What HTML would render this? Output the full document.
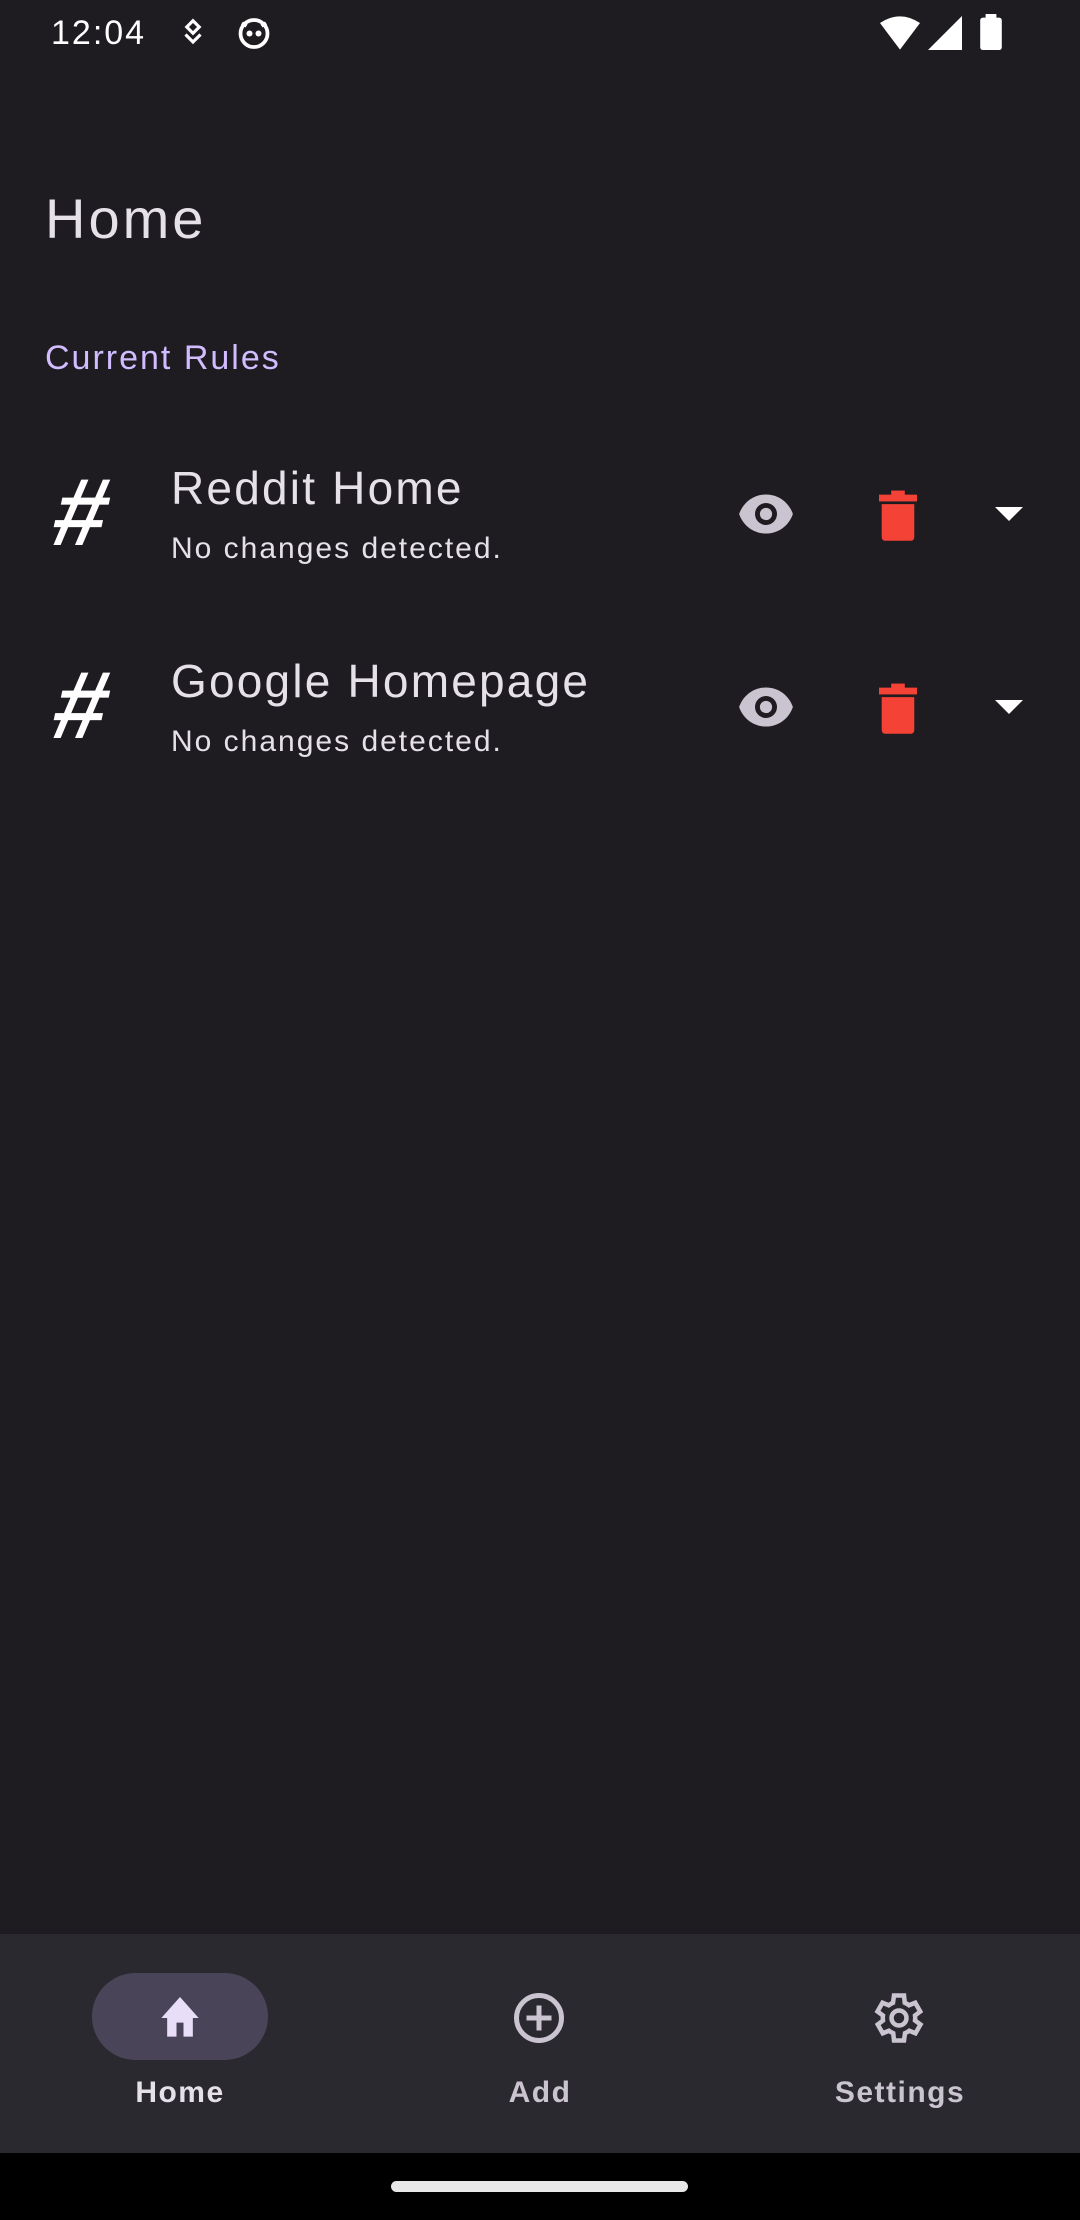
<!DOCTYPE html>
<html><head><meta charset="utf-8"><style>
body{margin:0;width:1080px;height:2220px;background:#1e1c21;font-family:"Liberation Sans",sans-serif;position:relative;overflow:hidden;color:#e6e0e9}
.a{position:absolute}
.h{font-size:96px;font-weight:bold;color:#fff;line-height:96px;transform:skewX(-12deg);letter-spacing:0}
</style></head><body>
<div class="a" style="left:51px;top:14px;font-size:34px;color:#fff;letter-spacing:2px">12:04</div>
<svg class="a" style="left:178px;top:16px" width="30" height="32" viewBox="0 0 24 24"><path d="M12 3l5 5-5 5-5-5z M6 14l6 6 6-6" fill="none" stroke="#fff" stroke-width="2.5"/></svg>
<svg class="a" style="left:236px;top:14px" width="36" height="36" viewBox="0 0 24 24"><circle cx="12" cy="13" r="9" fill="none" stroke="#fff" stroke-width="2.5"/><circle cx="9" cy="13" r="2" fill="#fff"/><circle cx="15" cy="13" r="2" fill="#fff"/><path d="M4 6l3 2M20 6l-3 2" stroke="#fff" stroke-width="2.5"/></svg>
<svg class="a" style="left:880px;top:16px" width="40" height="34" viewBox="0 0 24 20"><path d="M0 4Q12-4 24 4L12 20z" fill="#fff"/></svg>
<svg class="a" style="left:928px;top:16px" width="34" height="34" viewBox="0 0 20 20"><path d="M20 0V20H0z" fill="#fff"/></svg>
<svg class="a" style="left:980px;top:14px" width="22" height="36" viewBox="0 0 12 20"><rect x="3" y="0" width="6" height="3" fill="#fff"/><rect x="0" y="2" width="12" height="18" rx="1.5" fill="#fff"/></svg>

<div class="a" style="left:45px;top:186px;font-size:56px;color:#e6e0e9;letter-spacing:3px">Home</div>
<div class="a" style="left:45px;top:339px;font-size:34px;color:#d0bcff;letter-spacing:2px">Current Rules</div>

<div class="a" style="left:0;top:3px;width:1080px">
 <div class="a h" style="left:55px;top:462px">#</div>
 <div class="a" style="left:171px;top:458px;font-size:46px;line-height:54px;white-space:nowrap;letter-spacing:2.2px">Reddit Home</div>
 <div class="a" style="left:171px;top:528px;font-size:30px;line-height:36px;white-space:nowrap;letter-spacing:2px">No changes detected.</div>
 <svg class="a" style="left:736px;top:489px" width="60" height="44" viewBox="0 0 24 18"><path d="M12 1C7 1 2.7 4.1 1 9c1.7 4.9 6 8 11 8s9.3-3.1 11-8C21.3 4.1 17 1 12 1z" fill="#cac4d0"/><circle cx="12" cy="9" r="4.5" fill="#1e1c21"/><circle cx="12" cy="9" r="2.5" fill="#cac4d0"/></svg>
 <svg class="a" style="left:879px;top:486px" width="38" height="52" viewBox="0 0 14 19"><rect x="0" y="2" width="14" height="2.5" fill="#f44336"/><rect x="4.5" y="0.5" width="5" height="2" fill="#f44336"/><path d="M1 5.5h12V17.5q0 1.5-1.5 1.5h-9Q1 19 1 17.5z" fill="#f44336"/></svg>
 <svg class="a" style="left:995px;top:504px" width="28" height="16" viewBox="0 0 28 16"><path d="M0 0H28L14 14z" fill="#fff"/></svg>
</div>
<div class="a" style="left:0;top:196px;width:1080px">
 <div class="a h" style="left:55px;top:462px">#</div>
 <div class="a" style="left:171px;top:458px;font-size:46px;line-height:54px;white-space:nowrap;letter-spacing:2.2px">Google Homepage</div>
 <div class="a" style="left:171px;top:528px;font-size:30px;line-height:36px;white-space:nowrap;letter-spacing:2px">No changes detected.</div>
 <svg class="a" style="left:736px;top:489px" width="60" height="44" viewBox="0 0 24 18"><path d="M12 1C7 1 2.7 4.1 1 9c1.7 4.9 6 8 11 8s9.3-3.1 11-8C21.3 4.1 17 1 12 1z" fill="#cac4d0"/><circle cx="12" cy="9" r="4.5" fill="#1e1c21"/><circle cx="12" cy="9" r="2.5" fill="#cac4d0"/></svg>
 <svg class="a" style="left:879px;top:486px" width="38" height="52" viewBox="0 0 14 19"><rect x="0" y="2" width="14" height="2.5" fill="#f44336"/><rect x="4.5" y="0.5" width="5" height="2" fill="#f44336"/><path d="M1 5.5h12V17.5q0 1.5-1.5 1.5h-9Q1 19 1 17.5z" fill="#f44336"/></svg>
 <svg class="a" style="left:995px;top:504px" width="28" height="16" viewBox="0 0 28 16"><path d="M0 0H28L14 14z" fill="#fff"/></svg>
</div>

<div class="a" style="left:0;top:1934px;width:1080px;height:219px;background:#2b2930"></div>
<div class="a" style="left:92px;top:1973px;width:176px;height:87px;border-radius:44px;background:#4a4458"></div>
<svg class="a" style="left:152px;top:1990px" width="56" height="56" viewBox="0 0 24 24"><path d="M12 3L4 12h2.5v8h4v-6h3v6h4v-8H20z" fill="#e8def8"/></svg>
<svg class="a" style="left:509px;top:1988px" width="60" height="60" viewBox="0 0 24 24"><circle cx="12" cy="12" r="9" fill="none" stroke="#cac4d0" stroke-width="2"/><path d="M12 7v10M7 12h10" stroke="#cac4d0" stroke-width="2"/></svg>
<svg class="a" style="left:869px;top:1988px" width="60" height="60" viewBox="0 0 24 24"><path d="M19.4 13a7.5 7.5 0 000-2l2.1-1.6-2-3.5-2.5 1a7.6 7.6 0 00-1.7-1L15 3h-4l-.4 2.9a7.6 7.6 0 00-1.7 1l-2.5-1-2 3.5L6.6 11a7.5 7.5 0 000 2l-2.1 1.6 2 3.5 2.5-1a7.6 7.6 0 001.7 1L11 21h4l.4-2.9a7.6 7.6 0 001.7-1l2.5 1 2-3.5z" fill="none" stroke="#cac4d0" stroke-width="1.8" transform="translate(-1 0)"/><circle cx="12" cy="12" r="3" fill="none" stroke="#cac4d0" stroke-width="1.8"/></svg>
<div class="a" style="left:92px;top:2076px;width:176px;text-align:center;font-size:30px;font-weight:bold;color:#e6e0e9;letter-spacing:1.5px">Home</div>
<div class="a" style="left:450px;top:2076px;width:180px;text-align:center;font-size:30px;font-weight:bold;color:#cac4d0;letter-spacing:1.5px">Add</div>
<div class="a" style="left:810px;top:2076px;width:180px;text-align:center;font-size:30px;font-weight:bold;color:#cac4d0;letter-spacing:1.5px">Settings</div>

<div class="a" style="left:0;top:2153px;width:1080px;height:67px;background:#000"></div>
<div class="a" style="left:391px;top:2181px;width:297px;height:11px;border-radius:6px;background:#e8e8e8"></div>
</body></html>
